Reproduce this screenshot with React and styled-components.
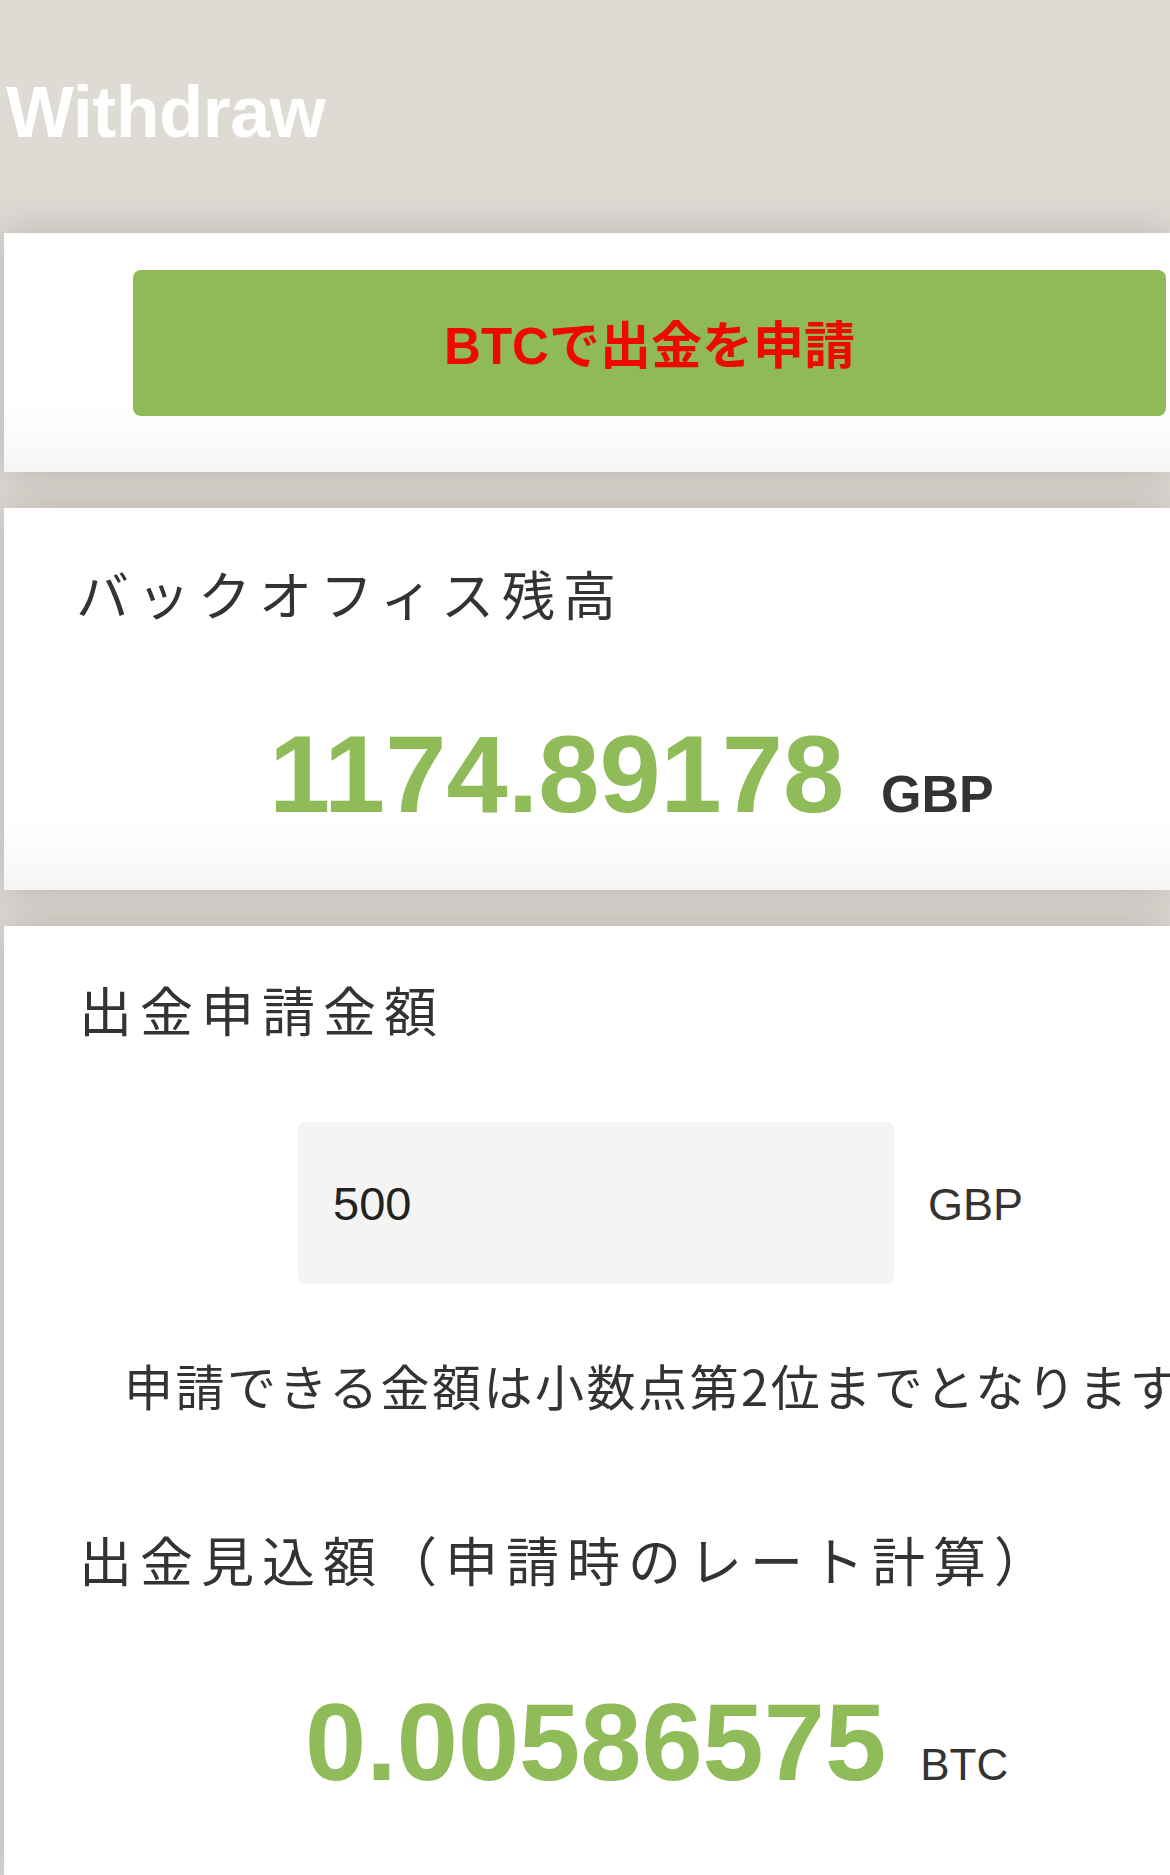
import React from "react";
import styled, { createGlobalStyle } from "styled-components";

const Global = createGlobalStyle`
  html, body {
    margin: 0;
    padding: 0;
    background: #dedad4;
    overflow-x: hidden;
  }
  body {
    font-family: "Liberation Sans", "Noto Sans CJK JP", sans-serif;
  }
`;

const Page = styled.div`
  display: flex;
  flex-direction: column;
  gap: 36px;
  width: 1170px;
  min-height: 1875px;
  overflow: hidden;
`;

const Header = styled.header`
  height: 233px;
  display: flex;
  align-items: center;
  padding: 0 0 10px 6px;
  box-sizing: border-box;
  margin-bottom: -36px;
`;

const Title = styled.h1`
  margin: 0;
  font-family: "Liberation Sans", Arial, sans-serif;
  font-weight: 700;
  font-size: 72px;
  line-height: 1;
  color: #ffffff;
  letter-spacing: -0.5px;
`;

const Card = styled.section`
  margin-left: 4px;
  background: linear-gradient(
    to bottom,
    #ffffff calc(100% - ${(p) => p.$fade || 60}px),
    #f6f6f6 100%
  );
  box-shadow: 0 0 40px rgba(80, 70, 60, 0.26);
  padding: ${(p) => p.$pad};
  box-sizing: border-box;
  display: flex;
  flex-direction: column;
  flex: ${(p) => (p.$grow ? 1 : "none")};
`;

const ActionButton = styled.button`
  height: 146px;
  width: 1033px;
  border: none;
  border-radius: 8px;
  background: #8fba57;
  color: #ee0a00;
  font-family: "Liberation Sans", "Noto Sans CJK JP", sans-serif;
  font-weight: 700;
  font-size: 51px;
  cursor: pointer;
  padding: 0 0 2px 0;
`;

const Heading = styled.h2`
  margin: ${(p) => p.$top || 0}px 0 0 ${(p) => p.$indent}px;
  font-family: "Noto Sans CJK JP", sans-serif;
  font-weight: 400;
  font-size: 53px;
  line-height: 1;
  letter-spacing: 8px;
  color: #333333;
  white-space: nowrap;
`;

const AmountRow = styled.div`
  display: flex;
  align-items: baseline;
  margin-top: ${(p) => p.$top}px;
  padding-left: ${(p) => p.$left}px;
  line-height: 1;
`;

const BigNumber = styled.span`
  font-family: "Liberation Sans", Arial, sans-serif;
  font-weight: 700;
  font-size: ${(p) => p.$size}px;
  line-height: 1;
  color: #8fbb58;
`;

const Unit = styled.span`
  font-family: "Liberation Sans", Arial, sans-serif;
  font-weight: ${(p) => (p.$bold ? 700 : 400)};
  font-size: ${(p) => p.$size}px;
  color: #333333;
  margin-left: ${(p) => p.$gap}px;
`;

const InputRow = styled.div`
  display: flex;
  align-items: center;
  margin-top: 86px;
  padding-left: 294px;
`;

const AmountInput = styled.input`
  width: 596px;
  height: 162px;
  box-sizing: border-box;
  border: none;
  border-radius: 6px;
  background: #f4f4f4;
  padding: 0 0 0 35px;
  font-family: "Liberation Sans", Arial, sans-serif;
  font-size: 47px;
  color: #222222;
  outline: none;
`;

const InputUnit = styled.span`
  font-family: "Liberation Sans", Arial, sans-serif;
  font-size: 45px;
  color: #333333;
  margin-left: 34px;
  padding-top: 4px;
`;

const Note = styled.p`
  margin: 76px 0 0 0;
  padding-left: 120px;
  font-family: "Noto Sans CJK JP", sans-serif;
  font-size: 49px;
  line-height: 1;
  letter-spacing: 2.5px;
  color: #333333;
  white-space: nowrap;
`;

export default function App() {
  return (
    <>
      <Global />
      <Page>
        <Header>
          <Title>Withdraw</Title>
        </Header>
        <Card $pad="37px 4px 56px 129px" $fade={70}>
          <ActionButton>BTCで出金を申請</ActionButton>
        </Card>
        <Card $pad="59px 0 61px 0" $fade={70}>
          <Heading $indent={72}>バックオフィス残高</Heading>
          <AmountRow $top={99} $left={265}>
            <BigNumber $size={110}>1174.89178</BigNumber>
            <Unit $bold $size={52} $gap={37}>GBP</Unit>
          </AmountRow>
        </Card>
        <Card $pad="57px 0 80px 0" $grow $fade={1}>
          <Heading $indent={75}>出金申請金額</Heading>
          <InputRow>
            <AmountInput type="text" defaultValue="500" />
            <InputUnit>GBP</InputUnit>
          </InputRow>
          <Note>申請できる金額は小数点第2位までとなります</Note>
          <Heading $indent={75} $top={124}>
            出金見込額（申請時のレート計算）
          </Heading>
          <AmountRow $top={101} $left={301}>
            <BigNumber $size={110}>0.00586575</BigNumber>
            <Unit $size={44} $gap={34}>BTC</Unit>
          </AmountRow>
        </Card>
      </Page>
    </>
  );
}
